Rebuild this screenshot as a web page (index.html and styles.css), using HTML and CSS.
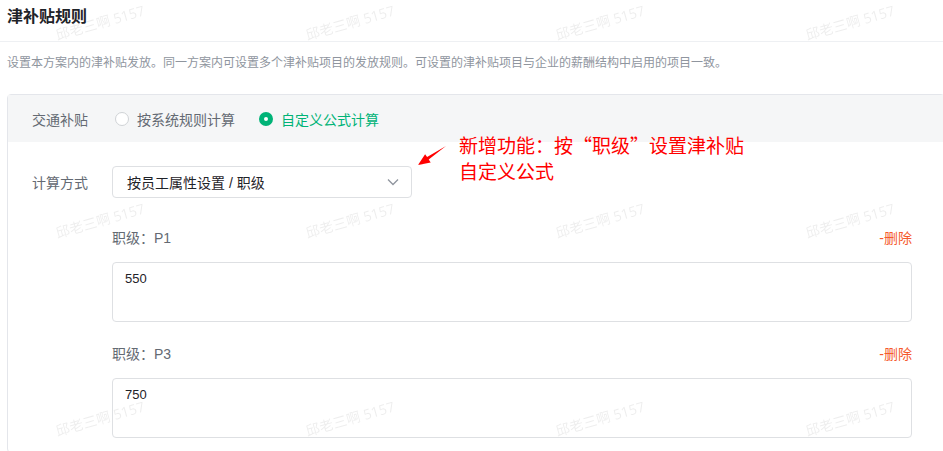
FILE: index.html
```html
<!DOCTYPE html>
<html lang="zh-CN">
<head>
  <meta charset="UTF-8" />
  <meta name="viewport" content="width=device-width, initial-scale=1.0"/>
  <title>津补贴规则</title>
  <link rel="stylesheet" href="styles.css">
</head>
<body>

  <div class="page">
    <h3 class="section-title">津补贴规则</h3>
    <p class="section-desc">设置本方案内的津补贴发放。同一方案内可设置多个津补贴项目的发放规则。可设置的津补贴项目与企业的薪酬结构中启用的项目一致。</p>

    <div class="rule-card">
      <div class="rule-head">
        <span class="rule-name">交通补贴</span>
        <label class="radio"><span class="radio-dot"></span>按系统规则计算</label>
        <label class="radio checked"><span class="radio-dot"></span>自定义公式计算</label>
      </div>

      <div class="rule-body">
        <div class="form-row">
          <span class="form-label">计算方式</span>
          <div class="select">
            <span>按员工属性设置 / 职级</span>
            <svg width="12" height="8" viewBox="0 0 12 8"><path d="M1 1.5 L6 6.5 L11 1.5" fill="none" stroke="#8f959e" stroke-width="1.3"/></svg>
          </div>
        </div>

        <div class="level">
          <div class="level-head">
            <span>职级：P1</span>
            <a class="del-link">-删除</a>
          </div>
          <div class="formula">550</div>
        </div>

        <div class="level">
          <div class="level-head">
            <span>职级：P3</span>
            <a class="del-link">-删除</a>
          </div>
          <div class="formula">750</div>
        </div>
      </div>
    </div>

    <!-- annotation drawn over the screenshot -->
    <svg class="note-arrow" width="40" height="30" viewBox="0 0 40 30">
      <polygon points="8,23 20.7,20.4 18.7,17.5 36,4 17.1,15.1 15.1,12.2" fill="#f00"/>
    </svg>
    <div class="note">新增功能：按“职级”设置津补贴<br>自定义公式</div>
  </div>

  <div class="watermarks">
    <span>邱老三啊 5157</span><span>邱老三啊 5157</span><span>邱老三啊 5157</span><span>邱老三啊 5157</span>
    <span>邱老三啊 5157</span><span>邱老三啊 5157</span><span>邱老三啊 5157</span><span>邱老三啊 5157</span>
    <span>邱老三啊 5157</span><span>邱老三啊 5157</span><span>邱老三啊 5157</span><span>邱老三啊 5157</span>
  </div>

</body>
</html>
```

FILE: styles.css
```css
html, body {
  margin: 0;
  overflow: hidden;
}

body {
  font-family: "Liberation Sans", "Noto Sans CJK SC", sans-serif;
  background: #fff;
  color: #1f2329;
}

.page {
  position: relative;
  padding-left: 7px;
}

.section-title {
  margin: 0 0 0 -7px;
  padding: 6px 0 13px 7px;
  font-size: 16px;
  font-weight: 600;
  line-height: 22px;
  border-bottom: 1px solid #eef0f3;
}

.section-desc {
  margin: 0;
  padding-top: 11px;
  font-size: 12px;
  line-height: 20px;
  color: #8f959e;
}

.rule-card {
  margin-top: 21px;
  margin-right: -2px;
  border: 1px solid #e4e6eb;
  border-radius: 4px;
}

.rule-head {
  display: flex;
  align-items: center;
  height: 47px;
  padding-left: 24px;
  background: #f5f6f7;
  font-size: 14px;
}

.rule-name {
  color: #646a73;
  margin-right: 27px;
}

.radio {
  display: flex;
  align-items: center;
  gap: 8px;
  margin-right: 24px;
  color: #646a73;
}

.radio-dot {
  width: 14px;
  height: 14px;
  box-sizing: border-box;
  border: 1px solid #d0d3d6;
  border-radius: 50%;
  background: #fff;
}

.radio.checked {
  color: #00b377;
}

.radio.checked .radio-dot {
  border: 5px solid #00b377;
}

.rule-body {
  padding: 24px 32px 14px 24px;
}

.form-row {
  display: flex;
  align-items: center;
  font-size: 14px;
}

.form-label {
  width: 80px;
  color: #646a73;
}

.select {
  width: 300px;
  height: 32px;
  box-sizing: border-box;
  display: flex;
  align-items: center;
  justify-content: space-between;
  padding: 0 12px 0 14px;
  border: 1px solid #dee0e3;
  border-radius: 4px;
  color: #1f2329;
}

.level {
  margin-left: 80px;
  margin-top: 21px;
}

.form-row + .level {
  margin-top: 29px;
}

.level-head {
  display: flex;
  justify-content: space-between;
  font-size: 14px;
  line-height: 22px;
  color: #646a73;
}

.del-link {
  color: #f5592d;
  cursor: pointer;
}

.formula {
  margin-top: 13px;
  height: 60px;
  box-sizing: border-box;
  padding: 6px 12px;
  border: 1px solid #dee0e3;
  border-radius: 4px;
  font-size: 13px;
  line-height: 20px;
  color: #1f2329;
}

.note-arrow {
  position: absolute;
  left: 410px;
  top: 142px;
}

.note {
  position: absolute;
  left: 459px;
  top: 132px;
  font-family: "Noto Sans CJK SC", sans-serif;
  font-size: 19px;
  line-height: 26px;
  color: #f00;
}

.watermarks {
  position: fixed;
  left: -25px;
  top: -77px;
  width: 1000px;
  display: grid;
  grid-template-columns: repeat(4, 250px);
  grid-auto-rows: 198px;
  pointer-events: none;
}

.watermarks span {
  display: flex;
  align-items: center;
  justify-content: center;
  font-family: "Open Sans", "Noto Sans CJK SC", sans-serif;
  font-size: 14px;
  color: rgba(0, 0, 0, 0.07);
  transform: rotate(-16deg);
  white-space: nowrap;
}
```
